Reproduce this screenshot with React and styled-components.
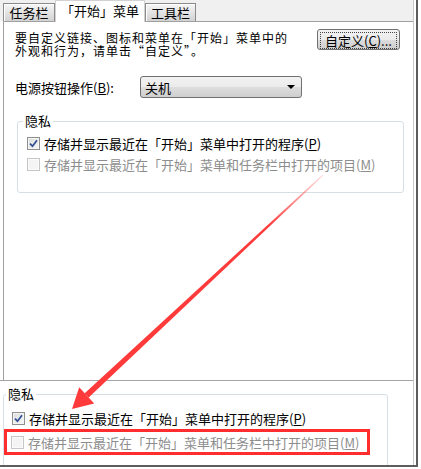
import React from "react"
import styled, { createGlobalStyle, css } from "styled-components"

const Global = createGlobalStyle`
    html, body {
        margin: 0;
        padding: 0;
        background: #fff;
    }
    body {
        font-family: "Noto Sans CJK SC", "Noto Sans", sans-serif;
        font-size: 13px;
        color: #000;
    }
`

const Page = styled.div`
    position: relative;
    width: 421px;
    height: 469px;
    overflow: hidden;
    background: #fff;
`

const Frame = styled.div`
    width: 416px;
    border-right: 2px solid #5d5d5d;
    border-bottom: 2px solid #5d5d5d;
`

const Content = styled.div`
    width: 413px;
    margin-right: 2px;
    border-right: 1px solid #c9c9c9;
`

const TopShot = styled.div`
    height: 380px;
    display: flex;
    flex-direction: column;
    border-bottom: 1px solid #a5a5a5;
`

const TabStrip = styled.div`
    position: relative;
    z-index: 1;
    height: 21px;
    flex: none;
    display: flex;
    align-items: flex-end;
    padding-left: 3px;
    background: #f0f0f0;
`

const Tab = styled.div`
    box-sizing: border-box;
    width: ${p => p.$w}px;
    height: 18px;
    display: flex;
    align-items: center;
    justify-content: center;
    font-size: 13px;
    line-height: 14px;
    border: 1px solid #8a8a8a;
    border-bottom: none;
    background: linear-gradient(#f6f6f6, #e4e4e4 50%, #d2d2d2);
    box-shadow: inset 1px 1px 0 #fff;

    ${p => p.$active && css`
        height: 22px;
        margin-bottom: -1px;
        border-color: #d2d2d2;
        background: #fff;
        box-shadow: none;
        padding-bottom: 2px;
    `}
`

const Panel = styled.div`
    flex: 1;
    margin-left: 3px;
    padding: 10px 0 0 11px;
    border-left: 1px solid #a0a0a0;
    border-top: 1px solid #a0a0a0;
    background: #fff;
`

const IntroRow = styled.div`
    display: flex;
    align-items: flex-start;
`

const Intro = styled.p`
    margin: 0;
    font-size: 12px;
    letter-spacing: 1px;
    line-height: 12.5px;
`

const PushButton = styled.button`
    box-sizing: border-box;
    width: 83px;
    height: 21px;
    margin: -3px 13px 0 auto;
    padding: 2px;
    border: 1px solid #707070;
    border-radius: 3px;
    background: linear-gradient(#f2f2f2, #ebebeb 50%, #dddddd 51%, #cfcfcf);
    font-family: inherit;
    font-size: 13px;
    color: #000;
`

const FocusRing = styled.span`
    display: flex;
    align-items: center;
    justify-content: center;
    height: 100%;
    border: 1px dotted #444;
    line-height: 13px;
`

const PowerRow = styled.div`
    display: flex;
    align-items: center;
    height: 22px;
    margin-top: 19px;
`

const FieldLabel = styled.span`
    width: 125px;
    font-size: 13px;
`

const Select = styled.div`
    box-sizing: border-box;
    width: 162px;
    height: 22px;
    display: flex;
    align-items: center;
    justify-content: space-between;
    padding: 0 6px 0 4px;
    border: 1px solid #707070;
    border-radius: 3px;
    background: linear-gradient(#f2f2f2, #ebebeb 50%, #dddddd 51%, #cfcfcf);
    font-size: 13px;
`

const Caret = styled.span`
    width: 0;
    height: 0;
    border-left: 4px solid transparent;
    border-right: 4px solid transparent;
    border-top: 4px solid #000;
`

const GroupBox = styled.fieldset`
    box-sizing: border-box;
    margin: ${p => p.$compact ? "6px 0 0 3px" : "16px 0 0 2px"};
    width: ${p => p.$compact ? 385 : 387}px;
    min-height: ${p => p.$compact ? 120 : 0}px;
    padding: ${p => p.$compact ? "7px 0 0 8px" : "5px 0 17px 9px"};
    border: 1px solid #d5dfe5;
    border-radius: 3px;
`

const Legend = styled.legend`
    margin-left: ${p => p.$compact ? -6 : -4}px;
    padding: 0 2px;
    font-size: 13px;
    line-height: 14px;
`

const CheckRow = styled.div`
    display: flex;
    align-items: center;
    height: 21px;
    color: ${p => p.$disabled ? "#8d8d8d" : "#000"};
`

const Highlight = styled(CheckRow)`
    box-sizing: border-box;
    width: 366px;
    height: 26px;
    margin-left: -8px;
    padding-left: 4px;
    border: 3px solid #ff2d2d;
`

const Box = styled.span`
    box-sizing: border-box;
    flex: none;
    width: 13px;
    height: 13px;
    display: flex;
    align-items: center;
    justify-content: center;
    border: 1px solid ${p => p.$disabled ? "#c6c6c6" : "#8e8f8f"};
    background: ${p => p.$disabled
        ? "#f4f4f4"
        : "linear-gradient(135deg, #dcdcdc, #f8f8f8)"};
    box-shadow: inset 0 0 0 1px ${p => p.$disabled ? "#fbfbfb" : "#f4f4f4"};
`

const CheckText = styled.span`
    margin-left: 4px;
    font-size: 13px;
    white-space: nowrap;
`

const BottomShot = styled.div`
    height: 84px;
    overflow: hidden;
`

const ArrowLayer = styled.svg`
    position: absolute;
    left: 0;
    top: 0;
    pointer-events: none;
`

const Checkbox = ({ checked, disabled }) => (
    <Box $disabled={disabled}>
        {checked && (
            <svg width="9" height="9" viewBox="0 0 9 9">
                <path d="M1 4.6 L3.5 7.2 L8 1.2" fill="none" stroke="#2f4f93" strokeWidth="1.7" />
            </svg>
        )}
    </Box>
)

const RECENT_PROGRAMS = <>存储并显示最近在「开始」菜单中打开的程序(<u>P</u>)</>
const RECENT_ITEMS = <>存储并显示最近在「开始」菜单和任务栏中打开的项目(<u>M</u>)</>

// red annotation arrow pasted over the two screenshots
const Arrow = () => (
    <ArrowLayer width="421" height="469" viewBox="0 0 421 469">
        <defs>
            <linearGradient id="fade" gradientUnits="userSpaceOnUse" x1="323" y1="175" x2="268" y2="226">
                <stop offset="0" stopColor="#ff3a3a" stopOpacity="0.15" />
                <stop offset="1" stopColor="#ff3a3a" stopOpacity="1" />
            </linearGradient>
        </defs>
        <polygon points="323.4,175.4 322.6,174.6 84.7,393.2 88.7,397.6" fill="url(#fade)" />
        <polygon points="72,409 79.2,387.3 94.2,403.5" fill="#ff3a3a" />
    </ArrowLayer>
)

const App = () => (
    <Page>
        <Global />
        <Frame>
            <Content>
                <TopShot>
                    <TabStrip>
                        <Tab $w={52}>任务栏</Tab>
                        <Tab $w={90} $active>「开始」菜单</Tab>
                        <Tab $w={51}>工具栏</Tab>
                    </TabStrip>
                    <Panel>
                        <IntroRow>
                            <Intro>
                                要自定义链接、图标和菜单在「开始」菜单中的<br />
                                外观和行为，请单击“自定义”。
                            </Intro>
                            <PushButton type="button">
                                <FocusRing>自定义(<u>C</u>)...</FocusRing>
                            </PushButton>
                        </IntroRow>
                        <PowerRow>
                            <FieldLabel>电源按钮操作(<u>B</u>):</FieldLabel>
                            <Select>
                                关机
                                <Caret />
                            </Select>
                        </PowerRow>
                        <GroupBox>
                            <Legend>隐私</Legend>
                            <CheckRow>
                                <Checkbox checked />
                                <CheckText>{RECENT_PROGRAMS}</CheckText>
                            </CheckRow>
                            <CheckRow $disabled>
                                <Checkbox disabled />
                                <CheckText>{RECENT_ITEMS}</CheckText>
                            </CheckRow>
                        </GroupBox>
                    </Panel>
                </TopShot>
                <BottomShot>
                    <GroupBox $compact>
                        <Legend $compact>隐私</Legend>
                        <CheckRow>
                            <Checkbox checked />
                            <CheckText>{RECENT_PROGRAMS}</CheckText>
                        </CheckRow>
                        <Highlight $disabled>
                            <Checkbox disabled />
                            <CheckText>{RECENT_ITEMS}</CheckText>
                        </Highlight>
                    </GroupBox>
                </BottomShot>
            </Content>
        </Frame>
        <Arrow />
    </Page>
)

export default App
